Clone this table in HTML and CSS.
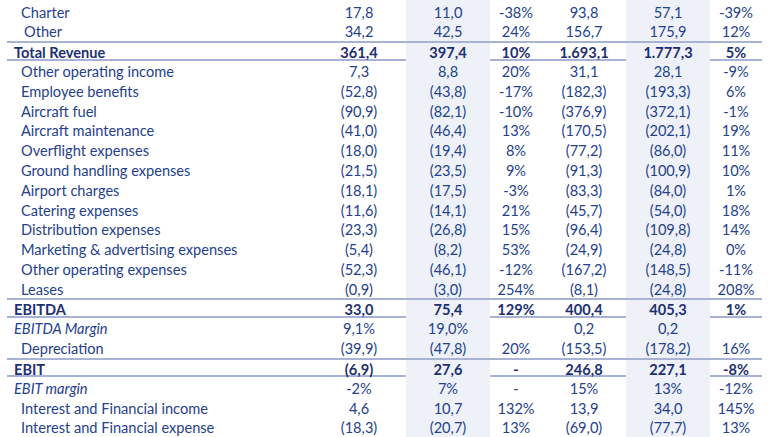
FILE: index.html
```html
<!DOCTYPE html>
<html>
<head>
<meta charset="utf-8">
<link rel="stylesheet" href="styles.css">
</head>
<body>
<div class="table">
  <div class="row first"><div class="lbl">Charter</div><div>17,8</div><div class="sh">11,0</div><div>-38%</div><div>93,8</div><div class="sh">57,1</div><div>-39%</div></div>
  <div class="row"><div class="lbl sp">Other</div><div>34,2</div><div class="sh">42,5</div><div>24%</div><div>156,7</div><div class="sh">175,9</div><div>12%</div></div>
  <div class="row total"><div class="lbl">Total Revenue</div><div>361,4</div><div class="sh">397,4</div><div>10%</div><div>1.693,1</div><div class="sh">1.777,3</div><div>5%</div></div>
  <div class="row"><div class="lbl">Other operating income</div><div>7,3</div><div class="sh">8,8</div><div>20%</div><div>31,1</div><div class="sh">28,1</div><div>-9%</div></div>
  <div class="row"><div class="lbl">Employee benefits</div><div>(52,8)</div><div class="sh">(43,8)</div><div>-17%</div><div>(182,3)</div><div class="sh">(193,3)</div><div>6%</div></div>
  <div class="row"><div class="lbl">Aircraft fuel</div><div>(90,9)</div><div class="sh">(82,1)</div><div>-10%</div><div>(376,9)</div><div class="sh">(372,1)</div><div>-1%</div></div>
  <div class="row"><div class="lbl">Aircraft maintenance</div><div>(41,0)</div><div class="sh">(46,4)</div><div>13%</div><div>(170,5)</div><div class="sh">(202,1)</div><div>19%</div></div>
  <div class="row"><div class="lbl">Overflight expenses</div><div>(18,0)</div><div class="sh">(19,4)</div><div>8%</div><div>(77,2)</div><div class="sh">(86,0)</div><div>11%</div></div>
  <div class="row"><div class="lbl">Ground handling expenses</div><div>(21,5)</div><div class="sh">(23,5)</div><div>9%</div><div>(91,3)</div><div class="sh">(100,9)</div><div>10%</div></div>
  <div class="row"><div class="lbl">Airport charges</div><div>(18,1)</div><div class="sh">(17,5)</div><div>-3%</div><div>(83,3)</div><div class="sh">(84,0)</div><div>1%</div></div>
  <div class="row"><div class="lbl">Catering expenses</div><div>(11,6)</div><div class="sh">(14,1)</div><div>21%</div><div>(45,7)</div><div class="sh">(54,0)</div><div>18%</div></div>
  <div class="row"><div class="lbl">Distribution expenses</div><div>(23,3)</div><div class="sh">(26,8)</div><div>15%</div><div>(96,4)</div><div class="sh">(109,8)</div><div>14%</div></div>
  <div class="row"><div class="lbl">Marketing &amp; advertising expenses</div><div>(5,4)</div><div class="sh">(8,2)</div><div>53%</div><div>(24,9)</div><div class="sh">(24,8)</div><div>0%</div></div>
  <div class="row"><div class="lbl">Other operating expenses</div><div>(52,3)</div><div class="sh">(46,1)</div><div>-12%</div><div>(167,2)</div><div class="sh">(148,5)</div><div>-11%</div></div>
  <div class="row"><div class="lbl">Leases</div><div>(0,9)</div><div class="sh">(3,0)</div><div>254%</div><div>(8,1)</div><div class="sh">(24,8)</div><div>208%</div></div>
  <div class="row total"><div class="lbl">EBITDA</div><div>33,0</div><div class="sh">75,4</div><div>129%</div><div>400,4</div><div class="sh">405,3</div><div>1%</div></div>
  <div class="row"><div class="lbl it">EBITDA Margin</div><div>9,1%</div><div class="sh">19,0%</div><div></div><div>0,2</div><div class="sh">0,2</div><div></div></div>
  <div class="row"><div class="lbl">Depreciation</div><div>(39,9)</div><div class="sh">(47,8)</div><div>20%</div><div>(153,5)</div><div class="sh">(178,2)</div><div>16%</div></div>
  <div class="row total"><div class="lbl">EBIT</div><div>(6,9)</div><div class="sh">27,6</div><div>-</div><div>246,8</div><div class="sh">227,1</div><div>-8%</div></div>
  <div class="row"><div class="lbl it">EBIT margin</div><div>-2%</div><div class="sh">7%</div><div>-</div><div>15%</div><div class="sh">13%</div><div>-12%</div></div>
  <div class="row"><div class="lbl">Interest and Financial income</div><div>4,6</div><div class="sh">10,7</div><div>132%</div><div>13,9</div><div class="sh">34,0</div><div>145%</div></div>
  <div class="row"><div class="lbl">Interest and Financial expense</div><div>(18,3)</div><div class="sh">(20,7)</div><div>13%</div><div>(69,0)</div><div class="sh">(77,7)</div><div>13%</div></div>
</div>
</body>
</html>
```
FILE: styles.css
```css
html, body {
  margin: 0;
  padding: 0;
  background: #ffffff;
}
.table {
  margin-left: 7px;
  width: 755px;
  font-family: Lato, "Liberation Sans", sans-serif;
  font-size: 14.6px;
  color: #25418e;
}
.row {
  display: grid;
  grid-template-columns: 305px 94px 84px 52px 84px 84px 52px;
  height: 19.8px;
  box-sizing: border-box;
}
.row > div {
  display: flex;
  align-items: center;
  justify-content: center;
  white-space: nowrap;
  padding-top: 2px;
  box-sizing: border-box;
}
.row > .lbl {
  justify-content: flex-start;
  padding-left: 14px;
}
.row > .lbl.sp {
  padding-left: 17px;
}
.row > .lbl.it {
  font-style: italic;
  padding-left: 7px;
}
.row > .sh {
  background: #eef1f8;
}
.row.first {
  height: 21px;
  padding-top: 1.5px;
}
.row.first > .sh {
  margin-top: -1.5px;
  padding-top: 3.5px;
}
.row.total {
  font-weight: bold;
  color: #1e2f70;
  border-top: 2px solid #a7b2d4;
  border-bottom: 2px solid #a7b2d4;
}
.row.total > div {
  padding-top: 1px;
}
.row.total > .lbl {
  padding-left: 7px;
}
```
